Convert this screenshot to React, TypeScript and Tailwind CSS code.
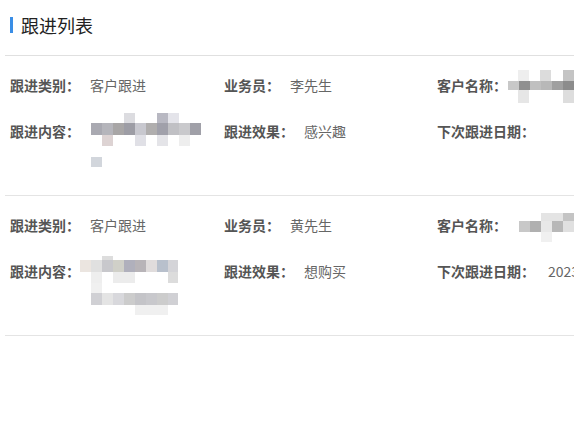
import React from "react";

type R = [number, number, number, number, string];

function Mosaic({ w, h, rects, className }: { w: number; h: number; rects: R[]; className?: string }) {
  return (
    <svg width={w} height={h} viewBox={`0 0 ${w} ${h}`} className={className} shapeRendering="crispEdges">
      {rects.map(([x, y, rw, rh, c], i) => (
        <rect key={i} x={x} y={y} width={rw} height={rh} fill={c} />
      ))}
    </svg>
  );
}

const c1content: R[] = [
  [0, 10, 11, 12, "#a9a9b1"], [11, 10, 11, 12, "#b5b5bb"], [22, 10, 11, 12, "#a8a6a6"], [33, 10, 11, 12, "#9d9da5"],
  [44, 10, 11, 12, "#c8c8cf"], [55, 10, 11, 12, "#b0aeae"], [66, 10, 11, 12, "#a0a0aa"], [77, 10, 11, 12, "#c0c0c4"],
  [88, 10, 11, 12, "#c9c9cc"], [99, 10, 11, 12, "#a0a0a8"],
  [33, 0, 11, 10, "#dcdce0"], [66, 0, 11, 10, "#b8b8c2"], [77, 0, 11, 10, "#e4e4ea"],
  [11, 22, 11, 11, "#ddd3d3"], [44, 22, 11, 11, "#e0e0e6"], [66, 22, 11, 11, "#e4e4e8"], [88, 22, 11, 11, "#eeeeee"],
  [0, 44, 11, 10, "#d2d6dc"],
];

const c1name: R[] = [
  [0, 11, 11, 9, "#c8c8c8"], [11, 11, 11, 9, "#909090"], [22, 11, 11, 9, "#c0c0c0"], [33, 11, 11, 9, "#b8b8b8"],
  [44, 11, 11, 9, "#a0a0a0"], [55, 11, 11, 9, "#8c8c8c"],
  [10, 0, 11, 11, "#eeeeee"], [32, 0, 11, 11, "#dcdcdc"], [55, 0, 11, 11, "#c4c4c4"],
  [10, 20, 11, 13, "#e6e6e6"], [55, 20, 11, 13, "#dddddd"],
];

const c2name: R[] = [
  [0, 8, 11, 11, "#c8c8c8"], [11, 8, 11, 11, "#b0b0b0"], [22, 8, 11, 11, "#e8e8e8"], [33, 8, 11, 11, "#b8b8b8"],
  [44, 8, 11, 11, "#e0e0e0"],
  [22, 0, 22, 8, "#e4e4e4"], [44, 0, 11, 8, "#c4c4c4"],
  [22, 19, 11, 10, "#f0f0f0"],
];

const c2content: R[] = [
  [0, 4, 11, 12, "#ebe5e0"], [11, 4, 11, 12, "#e0e0e0"], [22, 4, 11, 12, "#c8c8cc"], [33, 4, 11, 12, "#d0d0c8"],
  [44, 4, 11, 12, "#b0b0bc"], [55, 4, 11, 12, "#b8b4b8"], [66, 4, 11, 12, "#e0dcdc"], [77, 4, 11, 12, "#b8c0cc"],
  [88, 4, 10, 12, "#d4d4d8"],
  [22, 0, 11, 4, "#dddddd"],
  [11, 16, 11, 11, "#eeeeee"], [33, 16, 22, 11, "#ececec"], [88, 16, 10, 11, "#dcdcdc"],
  [11, 27, 11, 10, "#f0f0f0"],
  [11, 37, 11, 12, "#d0d0d4"], [22, 37, 11, 12, "#e4e4e4"], [33, 37, 11, 12, "#d8d8dc"], [44, 37, 11, 12, "#cccccc"],
  [55, 37, 11, 12, "#c4c4c8"], [66, 37, 11, 12, "#c8c8cc"], [77, 37, 11, 12, "#cccccc"], [88, 37, 10, 12, "#d0d0d4"],
  [55, 49, 33, 10, "#f0f0f0"],
];

function Field({ label, children }: { label: string; children?: React.ReactNode }) {
  return (
    <div className="flex items-start h-[20px] whitespace-nowrap">
      <span className="font-bold text-[#555555] leading-[20px]">{label}</span>
      {children}
    </div>
  );
}

function Value({ text }: { text: string }) {
  return <span className="ml-[10px] text-[#666666] leading-[20px]">{text}</span>;
}

function Card({
  type,
  staff,
  name,
  content,
  effect,
  date,
}: {
  type: string;
  staff: string;
  name: React.ReactNode;
  content: React.ReactNode;
  effect: string;
  date?: string;
}) {
  return (
    <div className="h-[140px] border-b border-[#e4e4e4] pl-[5px] pt-[19px]">
      <div className="grid grid-cols-[214px_213px_213px] gap-y-[26px]">
        <Field label="跟进类别：">
          <Value text={type} />
        </Field>
        <Field label="业务员：">
          <Value text={staff} />
        </Field>
        <Field label="客户名称：">{name}</Field>
        <Field label="跟进内容：">{content}</Field>
        <Field label="跟进效果：">
          <Value text={effect} />
        </Field>
        <Field label="下次跟进日期：">
          {date ? <span className="ml-[13px] text-[#666666] leading-[20px]">{date}</span> : null}
        </Field>
      </div>
    </div>
  );
}

export default function App() {
  return (
    <div
      className="w-[574px] h-[445px] overflow-hidden bg-white text-[14px]"
      style={{ fontFamily: '"Noto Sans CJK SC", "Noto Sans", sans-serif' }}
    >
      <div className="pl-[5px] w-[700px]">
        <div className="h-[56px] border-b border-[#e0e0e0] pl-[5px] pt-[15px]">
          <div className="flex items-center h-[20px]">
            <div className="w-[3px] h-[16px] bg-[#3a8ee6]" />
            <span className="ml-[8px] text-[18px] text-[#222222] leading-[20px]">跟进列表</span>
          </div>
        </div>
        <Card
          type="客户跟进"
          staff="李先生"
          name={<Mosaic w={66} h={33} rects={c1name} className="ml-[1px] -mt-[5px] shrink-0" />}
          content={<Mosaic w={110} h={55} rects={c1content} className="ml-[11px] -mt-[8px] shrink-0" />}
          effect="感兴趣"
        />
        <Card
          type="客户跟进"
          staff="黄先生"
          name={<Mosaic w={55} h={30} rects={c2name} className="ml-[12px] -mt-[2px] shrink-0" />}
          content={<Mosaic w={98} h={60} rects={c2content} className="ml-0 -mt-[5px] shrink-0" />}
          effect="想购买"
          date="2023-05-20"
        />
      </div>
    </div>
  );
}
